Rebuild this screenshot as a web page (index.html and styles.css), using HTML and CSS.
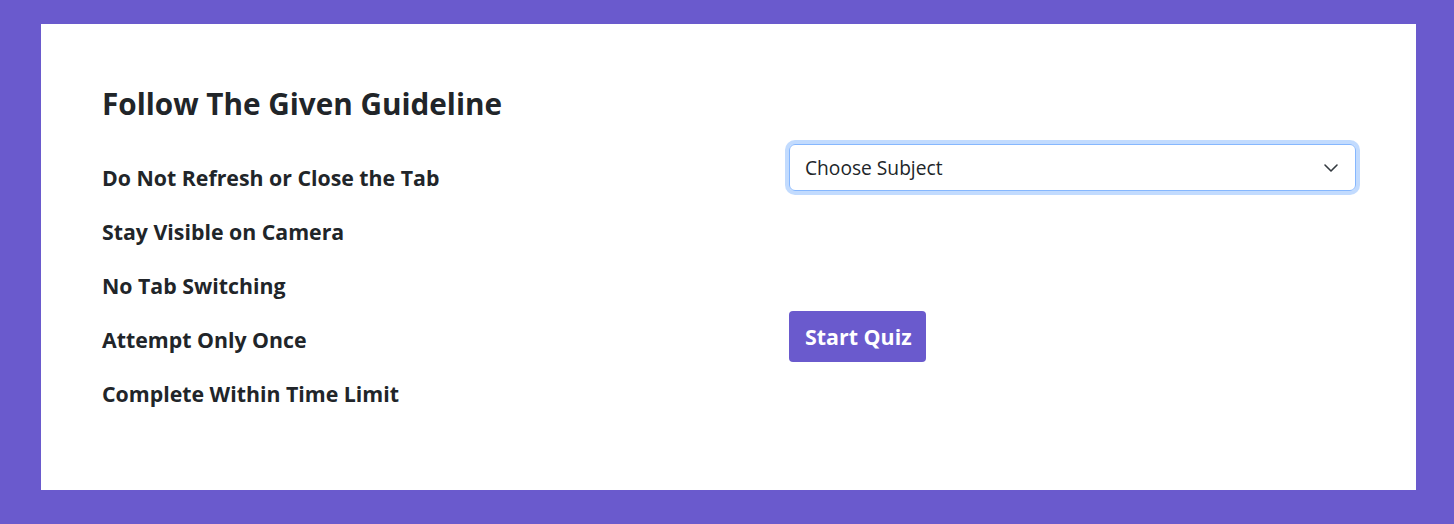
FILE: index.html
```html
<!DOCTYPE html>
<html lang="en">
<head>
<meta charset="utf-8">
<title>Quiz Guidelines</title>
<link rel="stylesheet" href="styles.css">
</head>
<body>
<div class="card">
  <div class="grid">
    <div class="left">
      <h3 class="title">Follow The Given Guideline</h3>
      <ul class="rules">
        <li>Do Not Refresh or Close the Tab</li>
        <li>Stay Visible on Camera</li>
        <li>No Tab Switching</li>
        <li>Attempt Only Once</li>
        <li>Complete Within Time Limit</li>
      </ul>
    </div>
    <div class="right">
      <div class="select">
        <span class="select-text">Choose Subject</span>
        <svg class="chev" width="16" height="12" viewBox="0 0 16 12"><path d="M2 3l6 6 6-6" fill="none" stroke="#343a40" stroke-width="1.6" stroke-linecap="round" stroke-linejoin="round"/></svg>
      </div>
      <button class="btn">Start Quiz</button>
    </div>
  </div>
</div>
</body>
</html>
```
FILE: styles.css
```css
* { box-sizing: border-box; }
html, body { margin: 0; padding: 0; }
body {
  background: #6a5acd;
  padding: 24px 38px 34px 41px;
  font-family: "Open Sans", "Noto Sans", sans-serif;
  color: #212529;
  height: 524px;
}
.card {
  background: #fff;
  height: 466px;
  padding: 0 60px 0 61px;
}
.grid {
  display: grid;
  grid-template-columns: 687px 1fr;
}
.left { padding-top: 63px; }
.title {
  margin: 0;
  font-size: 29.7px;
  font-weight: 700;
  line-height: 34px;
}
.rules {
  list-style: none;
  margin: 45px 0 0;
  padding: 0;
  display: flex;
  flex-direction: column;
  gap: 30px;
}
.rules li {
  font-size: 21.3px;
  font-weight: 700;
  line-height: 24px;
}
.right {
  padding-top: 120px;
  display: flex;
  flex-direction: column;
  align-items: flex-start;
}
.select {
  width: 100%;
  height: 47px;
  border: 1px solid #86b7fe;
  border-radius: 6px;
  box-shadow: 0 0 0 4px rgba(13, 110, 253, 0.25);
  display: flex;
  align-items: center;
  justify-content: space-between;
  padding: 0 16px 0 15px;
  font-size: 19.2px;
}
.chev { display: block; }
.btn {
  margin-top: 120px;
  background: #6a5acd;
  color: #fff;
  border: 0;
  border-radius: 4px;
  width: 137px;
  height: 51px;
  font-family: inherit;
  font-size: 21.4px;
  font-weight: 700;
  text-align: left;
  padding: 0 0 0 16px;
}
```
